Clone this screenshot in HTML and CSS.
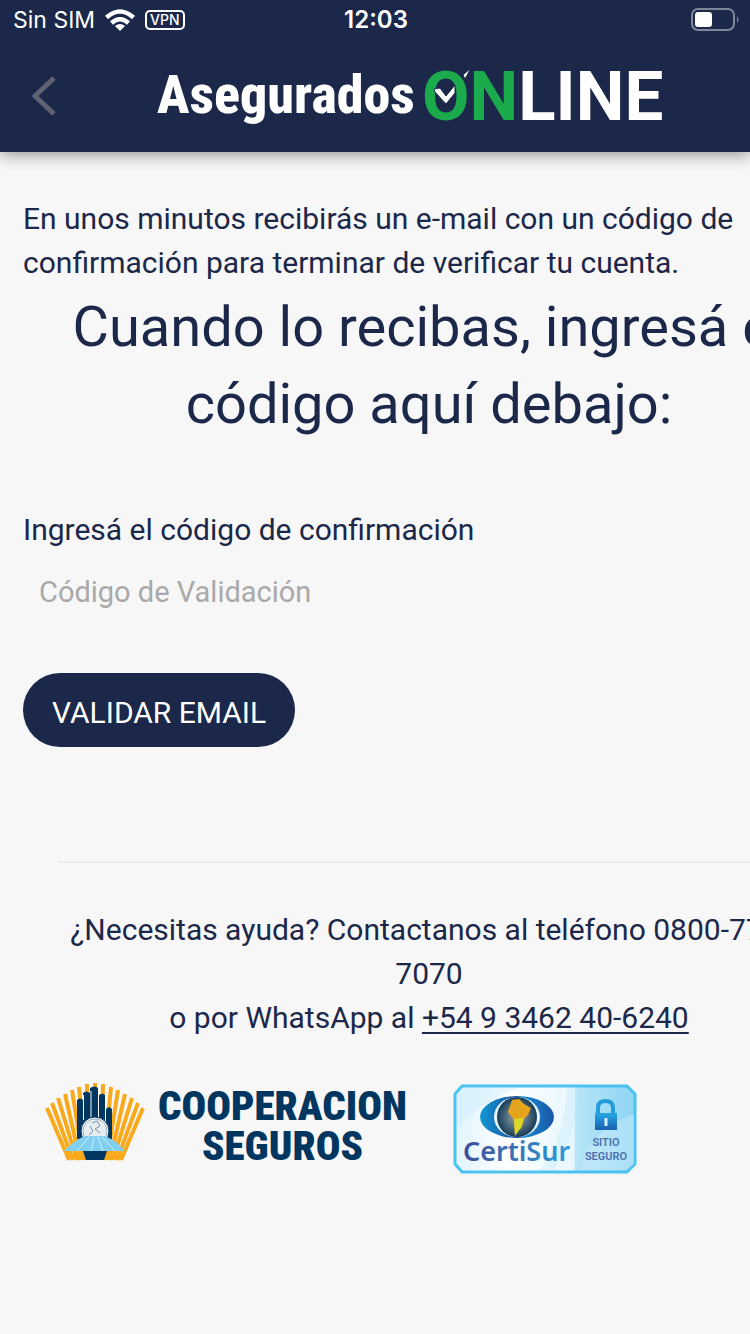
FILE: index.html
```html
<!DOCTYPE html>
<html lang="es">
<head>
<meta charset="utf-8">
<meta name="viewport" content="width=device-width, initial-scale=1">
<title>Asegurados Online</title>
<link rel="stylesheet" href="styles.css">
</head>
<body>
<header class="top">
  <div class="status">
    <div class="status-left">
      <span>Sin SIM</span>
      <svg class="wifi" viewBox="0 0 30 22" aria-hidden="true"><g fill="none" stroke="#fff" stroke-width="4.500"><path d="M1.500 8.500Q15-3.500 28.500 8.500"/><path d="M6.500 14Q15 6.500 23.500 14"/></g><path fill="#fff" d="M10 17Q15 13 20 17L15 22Z"/></svg>
      <span class="vpn">VPN</span>
    </div>
    <span class="clock">12:03</span>
    <svg class="battery" viewBox="0 0 48 24" aria-hidden="true"><rect x="1" y="1" width="42" height="21" rx="6" fill="none" stroke="#7e869a" stroke-width="2"/><rect x="4" y="4" width="17" height="15" rx="3" fill="#fff"/><path fill="#7e869a" d="M46 8Q49 11.500 46 15Z"/></svg>
  </div>
  <div class="nav">
    <button class="back" type="button" aria-label="Volver"><svg viewBox="0 0 24 40"><path d="M22 2L3 20L22 38" fill="none" stroke="#5f6270" stroke-width="5"/></svg></button>
    <svg class="brand" viewBox="0 0 510 80" role="img" aria-label="Asegurados Online">
      <text class="brand-a" x="1" y="63">Asegurados</text>
      <text class="brand-b" x="266" y="70"><tspan fill="#1cab4c">ON</tspan><tspan fill="#fff">LINE</tspan></text>
      <path fill="#fff" stroke="#1b284a" stroke-width="1" d="M278 39L284 38L290 46L299 35V43L290 54L279 42ZM307 25L315 18L309 29Z"/>
    </svg>
  </div>
</header>
<main class="page">
  <p class="intro">En unos minutos recibirás un e-mail con un código de<br>confirmación para terminar de verificar tu cuenta.</p>
  <h1 class="title wide">Cuando lo recibas, ingresá el<br>código aquí debajo:</h1>
  <form class="form">
    <label for="code">Ingresá el código de confirmación</label>
    <input id="code" type="text" placeholder="Código de Validación">
    <button class="submit" type="button">VALIDAR EMAIL</button>
  </form>
  <footer class="help wide">
    <p>¿Necesitas ayuda? Contactanos al teléfono 0800-777-<br>7070<br>o por WhatsApp al <a href="#whatsapp">+54 9 3462 40-6240</a></p>
  </footer>
  <div class="logos">
    <svg class="coop" viewBox="0 0 362 90" role="img" aria-label="Cooperacion Seguros">
      <g stroke="#f8a91c" stroke-width="4">
        <path d="M2 25L24 77M7 20L28 77M13 15L32 77M20 11L35 77M27 7L38 77M34 4L41 77M42 1L44 77M50 0V77M58 1L56 77M66 4L59 77M73 7L62 77M80 11L65 77M87 15L68 77M93 20L72 77M98 25L76 77"/>
      </g>
      <path fill="#00365f" d="M32 17Q35 14 38 17V10Q41 7 45 10V5Q50 2 53 5V13Q57 9 60 12V27Q64 22 67 26V56H32Z"/>
      <path d="M38.500 12V37M46 8V34M53.500 10V34M60.500 20V40" stroke="#f7f7f7" fill="none"/>
      <circle cx="50" cy="48" r="14" fill="#f7f7f7" stroke="#00365f"/><circle cx="50" cy="48" r="12" fill="#e5edf1" stroke="#9fb1bd"/>
      <path d="M47 40L52 38L55 43L50 46L55 50M45 43L48 48L44 52" fill="none" stroke="#7891a2"/>
      <path fill="#82d0f1" d="M19 68Q28 58 40 53H60Q72 58 80 68Z"/>
      <path d="M44 54L32 68M49 54L46 68M53 54L58 68M57 54L70 68" stroke="#c9ecfa" fill="none"/>
      <path fill="#00365f" d="M38 68H62L59 77H41Z"/>
      <text x="113" y="37">COOPERACION</text>
      <text x="157" y="77">SEGUROS</text>
    </svg>
    <svg class="cert" viewBox="0 0 184 90" role="img" aria-label="CertiSur sitio seguro">
      <defs>
        <linearGradient id="panel"><stop offset="0" stop-color="#dff4fd"/><stop offset=".3" stop-color="#fff"/><stop offset=".66" stop-color="#e8f7fd"/><stop offset=".67" stop-color="#b7e4f8"/><stop offset="1" stop-color="#8ed5f4"/></linearGradient>
        <linearGradient id="eye"><stop offset="0" stop-color="#1598d5"/><stop offset=".45" stop-color="#1556a2"/><stop offset=".6" stop-color="#168bd0"/><stop offset="1" stop-color="#1b55a6"/></linearGradient>
        <radialGradient id="globe"><stop offset="0" stop-color="#9ba9ad"/><stop offset="1" stop-color="#173c57"/></radialGradient>
        <linearGradient id="word"><stop offset="0" stop-color="#434c9b"/><stop offset="1" stop-color="#2b9cd7"/></linearGradient>
        <linearGradient id="lock" x2="0" y2="1"><stop offset="0" stop-color="#26a8e2"/><stop offset="1" stop-color="#1b61af"/></linearGradient>
      </defs>
      <path d="M9 2H174L182 10V80L174 88H9L2 80V10Z" fill="url(#panel)" stroke="#4bc2ef" stroke-width="3" stroke-linejoin="round"/>
      <path d="M4 44Q30 16 66 4H9L4 10ZM87 86Q112 54 114 4H124Q125 54 100 86Z" fill="#c9ecfa" opacity=".45"/>
      <path d="M128 86Q136 46 181 30V80L174 86Z" fill="#d5f1fc" opacity=".4"/>
      <ellipse cx="64" cy="33" rx="37" ry="21" fill="url(#eye)"/>
      <ellipse cx="64" cy="33" rx="23" ry="20" fill="#e8f5fb"/><circle cx="64" cy="33" r="20" fill="url(#globe)"/>
      <path d="M59 16L66 15L71 20L78 24L75 31L71 35L69 43L62 51L61 36L55 28Z" fill="#e4a41c"/><path d="M61 35L71 34L68 43L62 52Z" fill="#d8d82b"/>
      <text class="cert-name" x="10" y="77" fill="url(#word)">CertiSur</text>
      <path d="M145 31V24Q145 17 152.500 17Q160 17 160 24V31" fill="none" stroke="#229ddb" stroke-width="4"/>
      <rect x="142" y="29" width="22" height="17" fill="url(#lock)"/><path d="M153 34V42" stroke="#d7effa" stroke-width="3"/>
      <text class="cert-small" x="153" y="62">SITIO</text><text class="cert-small" x="153" y="76">SEGURO</text>
    </svg>
  </div>
</main>
</body>
</html>
```
FILE: styles.css
```css
* { box-sizing: border-box; }
body {
  margin: 0;
  min-height: 100vh;
  background: #f7f7f7;
  color: #1b284a;
  font: 30px/44px Roboto, sans-serif;
  overflow-x: hidden;
}
.top {
  position: relative;
  background: #1b284a;
  box-shadow: 0 2px 16px rgba(0, 0, 0, .45);
}
.status {
  display: grid;
  grid-template-columns: 1fr auto 1fr;
  align-items: center;
  height: 40px;
  padding: 0 11px 0 13px;
  color: #fff;
  font: 23px/40px Inter, sans-serif;
}
.status-left { display: flex; align-items: center; gap: 10px; }
.wifi { width: 30px; height: 22px; }
.vpn {
  height: 20px;
  padding: 0 3px;
  border: 2px solid #fff;
  border-radius: 5px;
  font-size: 14px;
  font-weight: 500;
  line-height: 16px;
}
.clock { font-size: 24px; font-weight: 600; }
.battery { justify-self: end; width: 48px; height: 24px; }
.nav { display: flex; align-items: flex-start; height: 112px; padding: 10px 32px; }
.back { width: 24px; height: 40px; margin-top: 26px; padding: 0; border: 0; background: none; }
.back svg { display: block; width: 100%; height: 100%; }
.brand { width: 510px; height: 80px; margin-left: 100px; overflow: visible; }
.brand-a { font: 800 54px "Roboto Condensed", "Liberation Sans Narrow", Roboto, sans-serif; fill: #fff; }
.brand-b { font: bold 69px Roboto, sans-serif; }
.page { padding: 45px 0 32px 23px; overflow: hidden; }
p { margin: 0; }
.wide { margin-right: -50px; margin-left: 35px; text-align: center; }
.title {
  margin-top: 4px;
  margin-bottom: 0;
  font: 400 56px/77px Roboto, sans-serif;
  white-space: nowrap;
}
.intro { white-space: nowrap; }
.form { display: flex; flex-direction: column; align-items: flex-start; margin-top: 65px; }
.form input {
  width: 90%;
  height: 60px;
  margin-top: 10px;
  padding: 0 16px;
  border: 0;
  background: transparent;
  color: inherit;
  font: inherit;
  font-size: 29px;
}
.form input::placeholder { color: #a9a9a9; opacity: 1; }
.submit {
  height: 74px;
  margin-top: 51px;
  padding: 4px 29px 0;
  border: 0;
  border-radius: 37px;
  background: #1b284a;
  color: #fff;
  font: 30px Roboto, sans-serif;
}
.help { margin-top: 114px; padding-top: 45px; border-top: 2px solid #eee; white-space: nowrap; }
.help a { color: inherit; text-decoration-thickness: 2px; text-underline-offset: 4px; }
.logos { display: flex; align-items: flex-start; gap: 46px; margin: 43px 0 0 22px; }
.coop { width: 362px; height: 90px; }
.coop text { font: 900 41px "Roboto Condensed", "Liberation Sans Narrow", Roboto, sans-serif; fill: #00365f; }
.cert { width: 184px; height: 90px; margin-top: 1px; }
.cert-name { font: 600 27px "Noto Sans", sans-serif; }
.cert-small { font: 600 11px Roboto, sans-serif; fill: #4d70ad; text-anchor: middle; }
```
